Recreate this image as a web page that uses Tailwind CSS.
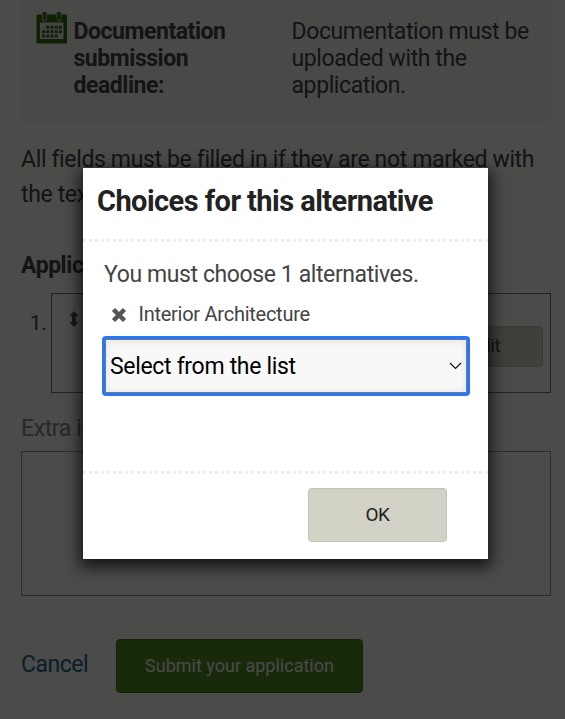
<!DOCTYPE html>
<html lang="en">
<head>
    <meta charset="UTF-8">
    <meta name="viewport" content="width=device-width, initial-scale=1.0">
    <title>Application</title>
    <script src="https://cdn.jsdelivr.net/npm/@tailwindcss/browser@4"></script>
</head>
<body class="h-[719px] overflow-hidden bg-[#fafaf5] font-['Roboto',sans-serif] text-[23px] tracking-[-0.4px] text-[#444]">
    <main class="px-[21px]">
        <!-- Deadline box -->
        <section class="flex h-[122px] w-[530px] bg-[#f4f4ef] pl-[15px] pt-[12px] leading-[27px]">
            <svg class="h-[33px] w-[32px] shrink-0" viewBox="0 0 32 33">
                <rect x="0.500" y="2.500" width="30.500" height="29" rx="1" fill="#346b12" />
                <rect x="4" y="10.500" width="23.500" height="16.500" fill="#e4e6de" />
                <path d="M8.500 1v6M23 1v6" stroke="#a9b59c" stroke-width="5" stroke-linecap="round" />
                <path d="M8.500 1v5.500M23 1v5.500" stroke="#346b12" stroke-width="3" stroke-linecap="round" />
                <path d="M10.200 15.300h16M6 19.700h20M6 24h16" stroke="#346b12" stroke-width="3" stroke-dasharray="3 1.200" />
            </svg>
            <strong class="ml-[5.500px] mt-[6px] w-[218px] pr-10 font-bold tracking-[-0.45px]">Documentation submission deadline:</strong>
            <p class="mt-[6px] w-[250px]">Documentation must be uploaded with the application.</p>
        </section>

        <p class="mt-[20px] w-[530px] leading-[35px] tracking-[-0.36px]">All fields must be filled in if they are not marked with the text</p>
        <h2 class="mt-[39px] font-bold leading-[30px] tracking-[-0.45px]">Applications</h2>

        <!-- Chosen alternatives -->
        <div class="mt-[12px] flex w-[530px]">
            <span class="w-[30px] pl-[9px] pt-[15px] text-[20px] tracking-normal">1.</span>
            <div class="flex h-[100px] flex-1 items-start justify-between border border-[#777] pl-[16px] pr-[7px]">
                <svg class="mt-[16px] h-[18px] w-[12px]" viewBox="0 0 12 18">
                    <path d="M6 1l4.500 5H8v6h2.500L6 17l-4.500-5H4V6H1.500z" fill="#555" />
                </svg>
                <button class="mt-[32px] h-[41px] w-[116px] rounded-[4px] border border-[#c2c2b0] bg-[#d2d2c6] text-[19px]">Edit</button>
            </div>
        </div>

        <label class="mt-[18px] block h-[35px] leading-[36px] text-[#888]">Extra info</label>
        <textarea class="mt-[5px] block h-[145px] w-[530px] resize-none border border-[#999] bg-[#fafafa]"></textarea>

        <div class="mt-[43px] flex items-center">
            <a href="#" class="w-[95px] pb-[2px] tracking-[-0.5px] text-[#1f6688]">Cancel</a>
            <button class="h-[54px] w-[247px] rounded-[4px] border border-[#47791c] bg-[#538d22] pb-[2px] text-[18px] tracking-normal text-[#f4f4f4]">Submit your application</button>
        </div>
    </main>

    <!-- Modal -->
    <div class="absolute inset-0 bg-black/70">
        <div class="ml-[83px] mt-[168px] h-[391px] w-[405px] bg-white shadow-[0_5px_15px_3px_rgba(0,0,0,0.75)]">
            <h1 class="h-[74px] border-b-[3px] border-dotted border-[#eee] pl-[14px] pt-[15px] text-[29px] font-bold leading-[36px] tracking-[-0.55px] text-[#222]">Choices for this alternative</h1>
            <div class="h-[232px] border-b-[3px] border-dotted border-[#eee] pl-[21px] pt-[15px]">
                <p class="leading-[35px]">You must choose 1 alternatives.</p>
                <div class="flex h-[41px] items-center pt-[2px] text-[20px] tracking-[-0.26px]">
                    <svg class="ml-[6px] mr-[11.500px] mt-[3px] h-[16px] w-[17px]" viewBox="0 0 17 16">
                        <path d="M3.500 2.500l11 11M14.500 2.500l-11 11" stroke="#555" stroke-width="4.500" />
                    </svg>
                    <span>Interior Architecture</span>
                </div>
                <div class="-ml-[2px] mt-[3px] h-[60px] w-[368px] rounded-[4px] bg-[#2478ff] p-[3px]">
                    <div class="flex h-full items-center justify-between border border-[#777] bg-[#f8f8f8] px-[4px] tracking-[-0.32px] text-black shadow-[inset_0_1px_7px_rgba(0,0,0,0.1)]">
                        <span class="pt-[2px]">Select from the list</span>
                        <svg class="h-[8px] w-[13px]" viewBox="0 0 13 8">
                            <path d="M1 1l5.500 5.500L12 1" fill="none" stroke="#111" stroke-width="1.200" />
                        </svg>
                    </div>
                </div>
            </div>
            <button class="ml-[225px] mt-[14px] h-[54px] w-[139px] rounded-[4px] border border-[#c2c2b0] bg-[#d2d2c6] text-[19px] tracking-[-0.6px] text-[#222]">OK</button>
        </div>
    </div>
</body>
</html>
